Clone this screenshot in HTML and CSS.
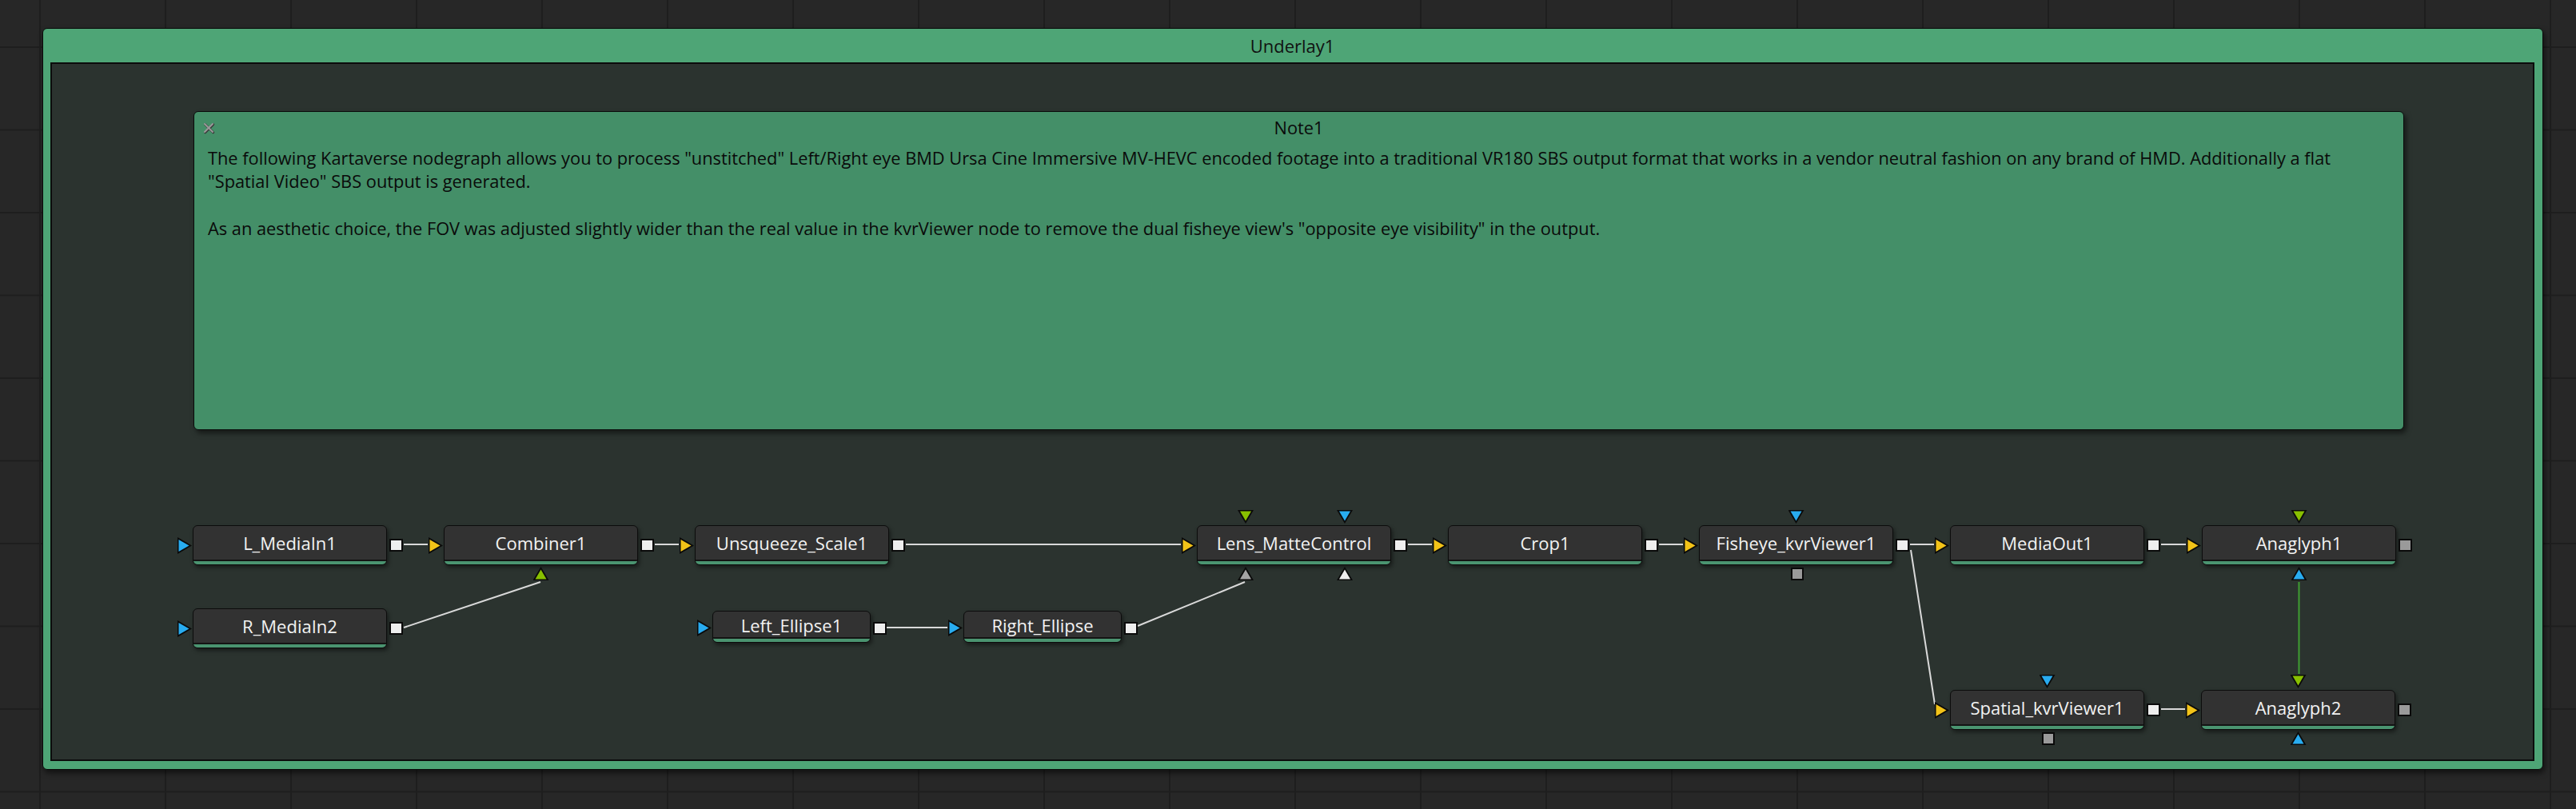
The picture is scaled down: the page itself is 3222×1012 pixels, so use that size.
FILE: index.html
```html
<!DOCTYPE html>
<html lang="en">
<head>
<meta charset="utf-8">
<title>Underlay1</title>
<link rel="stylesheet" href="styles.css">
</head>
<body>
<div class="underlay">
  <div class="underlay-title">Underlay1</div>
  <div class="underlay-body">
    <div class="note">
      <div class="note-head">
        <svg class="note-close" viewBox="0 0 16 16" width="16" height="16" aria-hidden="true">
          <path d="M3 3 L13 13 M13 3 L3 13" stroke="#3a3a3a" stroke-width="3" stroke-linecap="round" transform="translate(0.7 0.7)"/>
          <path d="M3 3 L13 13 M13 3 L3 13" stroke="#9a9a9a" stroke-width="2" stroke-linecap="round"/>
        </svg>
        <div class="note-title">Note1</div>
        <div></div>
      </div>
      <div class="note-text">
        <p>The following Kartaverse nodegraph allows you to process "unstitched" Left/Right eye BMD Ursa Cine Immersive MV-HEVC encoded footage into a traditional VR180 SBS output format that works in a vendor neutral fashion on any brand of HMD. Additionally a flat<br>"Spatial Video" SBS output is generated.</p>
        <p>As an aesthetic choice, the FOV was adjusted slightly wider than the real value in the kvrViewer node to remove the dual fisheye view's "opposite eye visibility" in the output.</p>
      </div>
    </div>

    <div class="graph">
      <svg class="wires" width="3103" height="412" aria-hidden="true">
        <g stroke="#d9d9d9" stroke-width="2" fill="none">
          <path d="M440 143 H470"/>
          <path d="M754 143 H784"/>
          <path d="M1068 143 H1412"/>
          <path d="M1696 143 H1726"/>
          <path d="M2010 143 H2040"/>
          <path d="M2324 143 H2354"/>
          <path d="M2638 143 H2669"/>
          <path d="M440 247 L611 190"/>
          <path d="M1044 247 H1120"/>
          <path d="M1358 245 L1492 190"/>
          <path d="M2325 150 L2355 343"/>
          <path d="M2638 349 H2668"/>
        </g>
        <path d="M2810.5 190 V305" stroke="#3f9f32" stroke-width="2"/>
      </svg>

      <div class="node" style="left:176px;top:119px">
        <span class="label">L_MediaIn1</span>
        <i class="pin in b"></i><i class="pin out w"></i>
      </div>
      <div class="node" style="left:490px;top:119px">
        <span class="label">Combiner1</span>
        <i class="pin in y"></i><i class="pin out w"></i><i class="pin bot g"></i>
      </div>
      <div class="node" style="left:804px;top:119px">
        <span class="label">Unsqueeze_Scale1</span>
        <i class="pin in y"></i><i class="pin out w"></i>
      </div>
      <div class="node" style="left:1432px;top:119px">
        <span class="label">Lens_MatteControl</span>
        <i class="pin in y"></i><i class="pin out w"></i>
        <i class="pin top g at-l"></i><i class="pin top b at-r"></i>
        <i class="pin bot gr at-l"></i><i class="pin bot w at-r"></i>
      </div>
      <div class="node" style="left:1746px;top:119px">
        <span class="label">Crop1</span>
        <i class="pin in y"></i><i class="pin out w"></i>
      </div>
      <div class="node" style="left:2060px;top:119px">
        <span class="label">Fisheye_kvrViewer1</span>
        <i class="pin in y"></i><i class="pin out w"></i>
        <i class="pin top b"></i><i class="pin bsq"></i>
      </div>
      <div class="node" style="left:2374px;top:119px">
        <span class="label">MediaOut1</span>
        <i class="pin in y"></i><i class="pin out w"></i>
        <span class="tab"><b class="dot dark"></b><b class="dot light"></b></span>
      </div>
      <div class="node" style="left:2689px;top:119px">
        <span class="label">Anaglyph1</span>
        <i class="pin in y"></i><i class="pin out gq"></i>
        <i class="pin top g"></i><i class="pin bot b"></i>
      </div>

      <div class="node" style="left:176px;top:223px">
        <span class="label">R_MediaIn2</span>
        <i class="pin in b"></i><i class="pin out w"></i>
      </div>
      <div class="node small" style="left:826px;top:226px">
        <span class="label">Left_Ellipse1</span>
        <i class="pin in b"></i><i class="pin out w"></i>
      </div>
      <div class="node small" style="left:1140px;top:226px">
        <span class="label">Right_Ellipse</span>
        <i class="pin in b"></i><i class="pin out w"></i>
      </div>

      <div class="node" style="left:2374px;top:325px">
        <span class="label">Spatial_kvrViewer1</span>
        <i class="pin in y"></i><i class="pin out w"></i>
        <i class="pin top b"></i><i class="pin bsq"></i>
      </div>
      <div class="node" style="left:2688px;top:325px">
        <span class="label">Anaglyph2</span>
        <i class="pin in y"></i><i class="pin out gq"></i>
        <i class="pin top g"></i><i class="pin bot b"></i>
      </div>
    </div>
  </div>
</div>
</body>
</html>
```
FILE: styles.css
```css
html, body {
  margin: 0;
}

body {
  width: 3222px;
  height: 1012px;
  overflow: hidden;
  box-sizing: border-box;
  padding: 35px 0 0 53px;
  background-color: #272727;
  background-image:
    linear-gradient(90deg, #1e1e1e 2px, transparent 2px),
    linear-gradient(#1e1e1e 2px, transparent 2px);
  background-size: 157px 103.5px;
  background-position: 49px 58px;
  font-family: "Open Sans", "Noto Sans", sans-serif;
}

.underlay {
  width: 3128px;
  height: 928px;
  box-sizing: border-box;
  background: #4ea576;
  border: 1px solid #0a0a0a;
  border-radius: 6px;
  padding: 0 10px 10px 9px;
  display: flex;
  flex-direction: column;
  box-shadow: 2px 4px 7px rgba(0, 0, 0, 0.55);
}

.underlay-title {
  height: 42px;
  flex: none;
  display: flex;
  align-items: center;
  justify-content: center;
  font-size: 22px;
  color: #111;
}

.underlay-body {
  flex: 1;
  background: #2b332f;
  border: 2px solid #0c0c0c;
  display: flex;
  flex-direction: column;
  min-height: 0;
}

/* Note */
.note {
  flex: none;
  margin: 59px 0 0 177px;
  width: 2765px;
  height: 399px;
  box-sizing: border-box;
  background: #448f68;
  border: 1px solid #0a0a0a;
  border-radius: 6px;
  box-shadow: 3px 4px 6px rgba(0, 0, 0, 0.5);
  color: #0a0a0a;
  font-size: 21.8px;
  line-height: 29.3px;
}

.note-head {
  display: grid;
  grid-template-columns: 1fr auto 1fr;
  align-items: start;
  padding: 4.5px 10px 0;
}

.note-close {
  margin-top: 7.5px;
  display: block;
}

.note-title {
  text-align: center;
}

.note-text {
  margin-top: 9px;
  padding-left: 17px;
  white-space: nowrap;
}

.note-text p {
  margin: 0;
}

.note-text p + p {
  margin-top: 29.3px;
}

/* Node graph */
.graph {
  position: relative;
  flex: 1;
}

.wires {
  position: absolute;
  left: 0;
  top: 0;
}

.node {
  --cy: 24px;
  position: absolute;
  width: 243px;
  height: 50px;
  box-sizing: border-box;
  background: #323232;
  border: 1px solid #0c0c0c;
  border-radius: 6px;
  box-shadow: 2px 3px 5px rgba(0, 0, 0, 0.45);
  display: flex;
  flex-direction: column;
}

.node::after {
  content: "";
  flex: none;
  height: 4px;
  border-top: 2px solid #141414;
  background: #4a9470;
  border-radius: 0 0 5px 5px;
}

.node.small {
  --cy: 20px;
  width: 198px;
  height: 40px;
}

.label {
  flex: 1;
  display: flex;
  align-items: center;
  justify-content: center;
  color: #f2f2f2;
  font-size: 22px;
  white-space: nowrap;
}

.node.small .label {
  padding-top: 2px;
}

/* Pins */
.pin {
  position: absolute;
  display: block;
  background: #0a0a0a;
}

.pin::after {
  content: "";
  position: absolute;
  inset: 0;
  background: var(--c, #eee);
}

.pin.y { --c: #f2c318; }
.pin.b { --c: #28acf0; }
.pin.g { --c: #88c000; }
.pin.gr { --c: #a4a4a4; }
.pin.w { --c: #eeeeee; }
.pin.gq { --c: #9a9a9a; }

.pin.in {
  left: -20px;
  top: calc(var(--cy) - 10px);
  width: 18px;
  height: 21px;
  clip-path: polygon(0 0, 100% 50%, 0 100%);
}

.pin.in::after {
  clip-path: polygon(1.5px 3px, calc(100% - 3.5px) 50%, 1.5px calc(100% - 3px));
}

.pin.out {
  left: calc(100% + 4px);
  top: calc(var(--cy) - 8px);
  width: 17px;
  height: 16px;
}

.pin.out::after {
  inset: 2px;
}

.node.small .pin.out {
  top: calc(var(--cy) - 7px);
}

.pin.top {
  top: -20px;
  left: calc(var(--px, 50%) - 10px);
  width: 20px;
  height: 17px;
  clip-path: polygon(0 0, 100% 0, 50% 100%);
}

.pin.top::after {
  clip-path: polygon(3px 1.5px, calc(100% - 3px) 1.5px, 50% calc(100% - 3.5px));
}

.pin.bot {
  top: calc(100% + 3px);
  left: calc(var(--px, 50%) - 10px);
  width: 20px;
  height: 17px;
  clip-path: polygon(50% 0, 100% 100%, 0 100%);
}

.pin.bot::after {
  clip-path: polygon(50% 3.5px, calc(100% - 3px) calc(100% - 1.5px), 3px calc(100% - 1.5px));
}

.pin.at-l { --px: 60px; }
.pin.at-r { --px: 184px; }

.pin.bsq {
  top: calc(100% + 4px);
  left: calc(50% - 7px);
  width: 16px;
  height: 16px;
  --c: #9a9a9a;
}

.pin.bsq::after {
  inset: 2px;
}

/* MediaOut tab */
.tab {
  position: absolute;
  left: 12px;
  top: calc(100% - 2px);
  width: 41px;
  height: 23px;
  box-sizing: border-box;
  background: #2e2e2e;
  border: 1px solid #0c0c0c;
  border-top: none;
  border-radius: 0 0 7px 7px;
  box-shadow: 2px 3px 4px rgba(0, 0, 0, 0.45);
  display: flex;
  align-items: center;
  justify-content: center;
  gap: 4px;
  padding-top: 3px;
  z-index: -1;
}

.dot {
  display: block;
  border-radius: 50%;
}

.dot.dark {
  width: 11px;
  height: 11px;
  background: #0a0a0a;
}

.dot.light {
  width: 8px;
  height: 8px;
  background: #f4f4f4;
  border: 1px solid #0a0a0a;
}
```
